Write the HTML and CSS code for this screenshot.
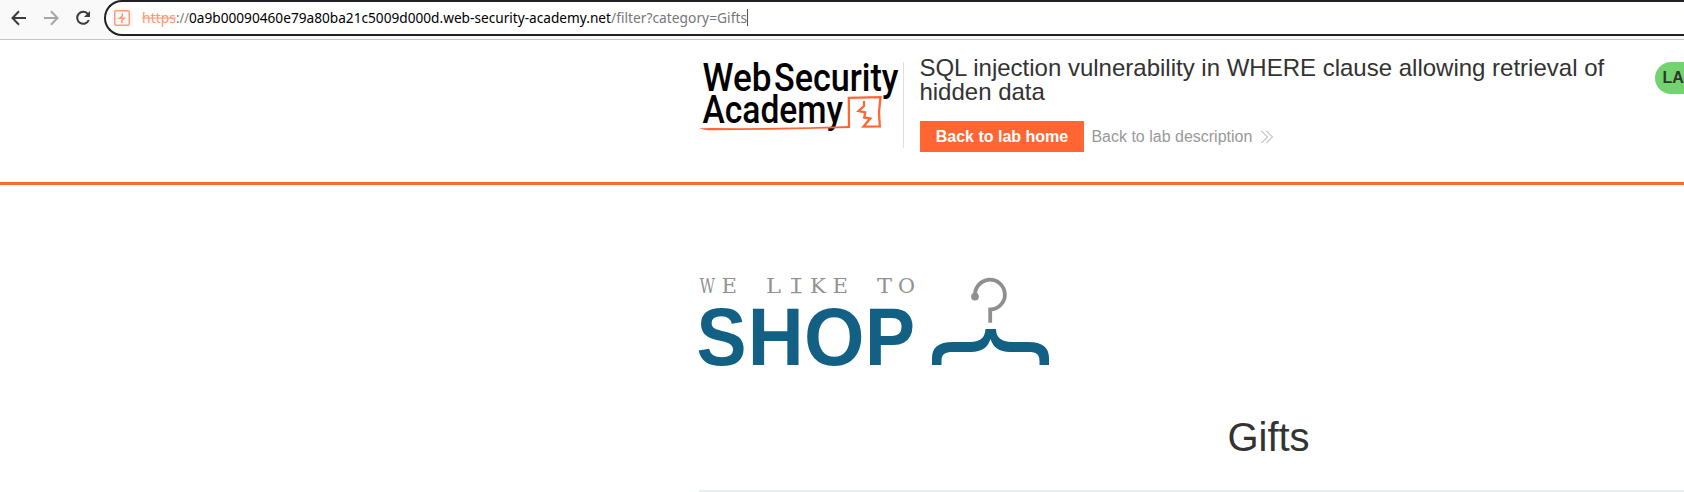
FILE: index.html
```html
<!DOCTYPE html>
<html lang="en">
<head>
<meta charset="utf-8">
<title>SQL injection vulnerability in WHERE clause allowing retrieval of hidden data</title>
<link rel="stylesheet" href="styles.css">
</head>
<body>
<div class="toolbar">
  <svg class="nav" width="104" height="39" viewBox="0 0 104 39" fill="none" stroke-width="2">
    <path d="M26 18H13M19 11.3L12.5 18L19 24.7" stroke="#3c3c3c"/>
    <path d="M44 18H57M51 11.3L57.5 18L51 24.7" stroke="#a6a6a6"/>
    <path d="M88 14.2A6 6 0 1 0 88.8 20" stroke="#3c3c3c"/>
    <path d="M90 11V17H84Z" fill="#3c3c3c"/>
  </svg>
  <div class="address">
    <svg width="800" height="32" viewBox="106 2 800 32">
      <rect x="112" y="8" width="21" height="20" rx="5" fill="#f8f8f8"/>
      <rect x="114.7" y="10.7" width="14.6" height="14.6" rx="1.5" fill="none" stroke="#ff9b76" stroke-width="1.5"/>
      <path d="M122.3 13.2V16L119.5 18.3H124.3L121.8 20.5V23" fill="none" stroke="#ff9b76" stroke-width="1.5"/>
      <g class="url">
        <text x="142" y="23" textLength="34" lengthAdjust="spacingAndGlyphs" fill="#ff9670">https</text>
        <path d="M142 18H176" stroke="#ff9670"/>
        <text x="176" y="23" textLength="13" lengthAdjust="spacingAndGlyphs" fill="#777">://</text>
        <text x="189" y="23" textLength="422" lengthAdjust="spacingAndGlyphs" fill="#000">0a9b00090460e79a80ba21c5009d000d.web-security-academy.net</text>
        <text x="611" y="23" textLength="136" lengthAdjust="spacingAndGlyphs" fill="#777">/filter?category=Gifts</text>
      </g>
      <path d="M747.5 9V26" stroke="#555"/>
    </svg>
  </div>
</div>
<header class="lab-header">
  <div class="container header-row">
    <svg class="academy" width="204" height="86" viewBox="699 62 204 86">
      <g class="academy-text">
        <text x="702.5" y="91" textLength="69" lengthAdjust="spacingAndGlyphs">Web</text>
        <text x="774" y="91" textLength="124.5" lengthAdjust="spacingAndGlyphs">Security</text>
        <text x="702.5" y="123" textLength="140.5" lengthAdjust="spacingAndGlyphs">Academy</text>
      </g>
      <path d="M699 128.2C702 129.6 707 130.3 713 130.2L770 129.8L850 128V126L810 127.2L740 128.3L712 128.1Z" fill="#ff6633"/>
      <path d="M849 128L848.8 97.8L880.5 97.2L879 112L879.8 126.3L863.5 126.6L870.3 118.6L864.2 117.5L865.3 112.5L858.5 111L864 106V101" fill="none" stroke="#ff6633" stroke-width="2.3"/>
    </svg>
    <div class="title-block">
      <h2>SQL injection vulnerability in WHERE clause allowing retrieval of hidden data</h2>
      <div class="links">
        <a class="button">Back to lab home</a>
        <a class="description">Back to lab description
          <svg width="12" height="14" viewBox="0 0 12 14" fill="none" stroke="#999" stroke-width=".9"><path d="M.5 1L6.5 7L.5 13M5.5 1L11.5 7L5.5 13"/></svg>
        </a>
      </div>
    </div>
    <div class="status">LA</div>
  </div>
</header>
<main class="container">
  <svg class="shop" width="352" height="92" viewBox="699 276 352 92">
    <g class="tagline">
      <text x="699.5" y="293.3" textLength="15.5" lengthAdjust="spacingAndGlyphs">W</text>
      <text x="721.5" y="293.3" textLength="15.5" lengthAdjust="spacingAndGlyphs">E</text>
      <text x="766" y="293.3" textLength="15" lengthAdjust="spacingAndGlyphs">L</text>
      <text x="792" y="293.3" textLength="8.5" lengthAdjust="spacingAndGlyphs">I</text>
      <path d="M791 278.7H801.5M791 292.7H801.5" stroke="#929292" stroke-width="1.2"/>
      <text x="810" y="293.3" textLength="16" lengthAdjust="spacingAndGlyphs">K</text>
      <text x="832.5" y="293.3" textLength="15.5" lengthAdjust="spacingAndGlyphs">E</text>
      <text x="877" y="293.3" textLength="15" lengthAdjust="spacingAndGlyphs">T</text>
      <text x="898" y="293.3" textLength="17" lengthAdjust="spacingAndGlyphs">O</text>
    </g>
    <g class="shop-text">
      <text x="696.5" y="365" textLength="50" lengthAdjust="spacingAndGlyphs">S</text>
      <text x="747.8" y="365" textLength="56" lengthAdjust="spacingAndGlyphs">H</text>
      <text x="804" y="365" textLength="60.5" lengthAdjust="spacingAndGlyphs">O</text>
      <text x="865" y="365" textLength="50" lengthAdjust="spacingAndGlyphs">P</text>
    </g>
    <path d="M975.2 296.5A14.9 14.9 0 1 1 990.2 309.5V322.7" fill="none" stroke="#8e8f90" stroke-width="3.8"/>
    <circle cx="975" cy="296.6" r="3.9" fill="#8e8f90"/>
    <path d="M985.5 329H996C996 337 1001 342 1012 342H1028C1043 342 1049 348 1049 358V365H1039.5V361C1039.5 354 1036 352 1029 352H1010C999 352 993 347 990.5 339C988 347 982 352 971 352H953C945 352 941.5 354 941.5 361V365H932V358C932 348 938 342 953 342H970C981 342 985 337 985.5 329Z" fill="#136085"/>
  </svg>
  <h1>Gifts</h1>
</main>
</body>
</html>
```
FILE: styles.css
```css
* { box-sizing: border-box; }
html { overflow: hidden; }
body {
  margin: 0;
  height: 492px;
  overflow: hidden;
  background: #fff;
  color: #333332;
  font-family: "Liberation Sans", Arial, sans-serif;
}
.toolbar {
  display: flex;
  height: 40px;
  background: #f9f9f9;
  border-bottom: 1px solid #c5c7c6;
}
.nav { flex: none; }
.address {
  flex: 1;
  height: 36px;
  border: 2px solid #202027;
  border-right: 0;
  border-radius: 18px 0 0 18px;
  background: #fff;
}
.address svg { display: block; }
.url { font: 14px "Noto Sans", sans-serif; }
.container { width: 1140px; margin-left: 699px; }
.lab-header { height: 145px; border-bottom: 3px solid #ff6633; }
.header-row { display: flex; }
.academy {
  flex: none;
  width: 205px;
  margin-top: 22px;
  border-right: 1px solid #dedede;
  overflow: visible;
}
.academy-text { font: 500 38px Roboto, sans-serif; }
.title-block { width: 720px; padding: 16px 0 0 16px; }
h2 { margin: 0 0 0 -0.6px; font-size: 24px; line-height: 24px; font-weight: 400; }
.links { display: flex; gap: 7.4px; margin-top: 17px; line-height: 31px; font-size: 16px; }
.button {
  width: 164px;
  height: 31px;
  text-align: center;
  background: #ff6633;
  color: #fff;
  font-weight: 700;
}
.description { display: flex; align-items: center; gap: 8.6px; color: #999; }
.status {
  width: 150px;
  height: 32px;
  margin: 22px 0 0 31px;
  padding-left: 7.6px;
  border-radius: 16px;
  background: #72d36f;
  font-weight: 700;
  line-height: 32px;
}
.shop { display: block; margin-top: 91px; overflow: visible; }
.tagline { font: 21px "DejaVu Serif", serif; fill: #929292; }
.shop-text { font: 700 81px "Liberation Sans", Arial, sans-serif; fill: #136085; }
h1 {
  height: 124px;
  margin: 0;
  padding-top: 46px;
  border-bottom: 2px solid #e9eff0;
  text-align: center;
  text-indent: -1px;
  font-size: 40px;
  line-height: 46px;
  font-weight: 400;
}
```
